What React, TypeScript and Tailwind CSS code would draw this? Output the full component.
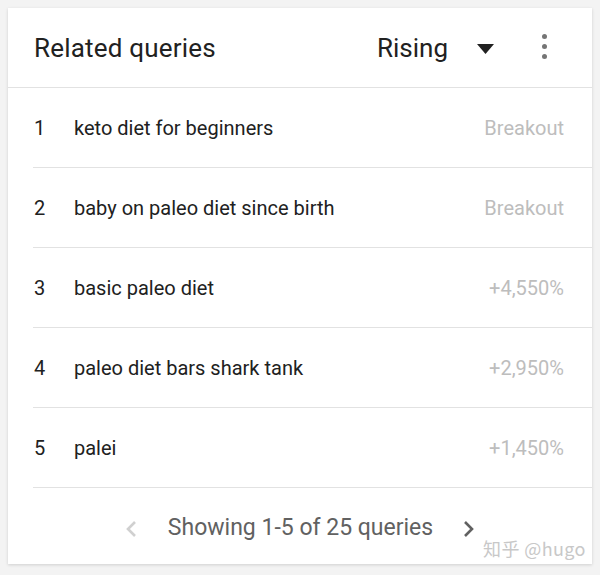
import React from "react";

const rows = [
  { n: 1, q: "keto diet for beginners", v: "Breakout" },
  { n: 2, q: "baby on paleo diet since birth", v: "Breakout" },
  { n: 3, q: "basic paleo diet", v: "+4,550%" },
  { n: 4, q: "paleo diet bars shark tank", v: "+2,950%" },
  { n: 5, q: "palei", v: "+1,450%" },
];

const App = () => {
  return (
    <div
      className="relative w-[600px] h-[575px] bg-[#f3f3f3] pt-2 pl-2"
      style={{ fontFamily: "Roboto, 'Noto Sans CJK SC', sans-serif" }}
    >
      <div className="w-[584px] h-[556px] bg-white shadow-[0_1px_3px_rgba(0,0,0,0.15)] flex flex-col">
        {/* header */}
        <div className="h-[80px] shrink-0 flex items-center border-b border-[#e2e2e2] pl-[26px] pr-[45px]">
          <span className="text-[26px] tracking-[0.2px] text-[#212121] leading-none">Related queries</span>
          <div className="ml-auto flex items-center">
            <span className="text-[26px] text-[#212121] leading-none">Rising</span>
            <svg className="ml-[29px] mt-[2px]" width="17" height="10" viewBox="0 0 17 10">
              <path d="M0 0 L17 0 L8.5 10 Z" fill="#212121" />
            </svg>
            <div className="ml-[48px] flex flex-col gap-[5px] mt-[-3px]">
              <span className="w-[5px] h-[5px] rounded-full bg-[#757575]" />
              <span className="w-[5px] h-[5px] rounded-full bg-[#757575]" />
              <span className="w-[5px] h-[5px] rounded-full bg-[#757575]" />
            </div>
          </div>
        </div>

        {/* rows */}
        {rows.map((r) => (
          <div
            key={r.n}
            className="h-[80px] shrink-0 ml-[25px] flex items-center border-b border-[#e2e2e2] pl-[1px] pr-[28px]"
          >
            <span className="w-[40px] text-[20px] text-[#212121]">{r.n}</span>
            <span className="text-[20px] text-[#212121]">{r.q}</span>
            <span className="ml-auto text-[20px] text-[#bdbdbd]">{r.v}</span>
          </div>
        ))}

        {/* footer */}
        <div className="flex-1 flex items-center justify-center pt-[5px]">
          <svg width="12" height="18" viewBox="0 0 12 18" className="mt-[1px]">
            <path d="M10 2 L3 9 L10 16" stroke="#d0d0d0" strokeWidth="2.6" fill="none" />
          </svg>
          <span className="ml-[31px] mr-[30px] text-[23px] text-[#616161]">Showing 1-5 of 25 queries</span>
          <svg width="12" height="18" viewBox="0 0 12 18" className="mt-[1px]">
            <path d="M2 2 L9 9 L2 16" stroke="#616161" strokeWidth="2.6" fill="none" />
          </svg>
        </div>
      </div>

      {/* watermark */}
      <div
        className="absolute left-[483px] top-[539px] text-[18px] tracking-[0.4px] text-[#c8c8c8] leading-none"
        style={{ textShadow: "0 0 2px #fff", fontFamily: "'Noto Sans CJK SC', Roboto, sans-serif" }}
      >
        知乎 @hugo
      </div>
    </div>
  );
};

export default App;
